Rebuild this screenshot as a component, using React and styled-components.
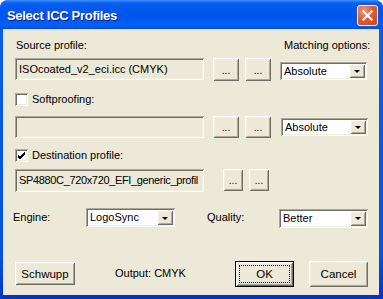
import React from "react";
import styled, { createGlobalStyle } from "styled-components";

const GlobalStyle = createGlobalStyle`
  html, body {
    margin: 0;
    padding: 0;
    background: #ffffff;
  }
  body {
    font-family: "Liberation Sans", Arial, sans-serif;
    font-size: 11px;
    color: #000000;
  }
`;

const raised = `
  box-shadow: inset 1px 1px #ffffff, inset -1px -1px #716f64,
    inset 2px 2px #f1efe2, inset -2px -2px #aca899;
`;

const sunken = `
  box-shadow: inset 1px 1px #aca899, inset -1px -1px #ffffff,
    inset 2px 2px #716f64, inset -2px -2px #f1efe2;
`;

const Window = styled.div`
  width: 383px;
  height: 299px;
  display: flex;
  flex-direction: column;
  border-radius: 8px 8px 0 0;
  background: linear-gradient(to bottom, #0b5fe9 0%, #0453e1 85%, #0035c4 100%);
  overflow: hidden;
`;

const TitleBar = styled.div`
  height: 29px;
  flex: none;
  display: flex;
  align-items: center;
  justify-content: space-between;
  padding: 0 5px 0 7px;
  background: linear-gradient(
    to bottom,
    #3d95ff 0%,
    #0a5ff2 10%,
    #0058ee 30%,
    #0056ea 60%,
    #0062fc 88%,
    #0057f0 94%,
    #0045d8 100%
  );
`;

const Title = styled.span`
  font-family: "Liberation Sans", Arial, sans-serif;
  font-weight: bold;
  font-size: 13px;
  letter-spacing: -0.3px;
  color: #ffffff;
  text-shadow: 1px 1px #0a1883;
  padding-top: 1px;
`;

const CloseButton = styled.div`
  width: 21px;
  height: 21px;
  box-sizing: border-box;
  border: 1px solid #ffffff;
  border-radius: 3px;
  background: radial-gradient(circle at 30% 25%, #f29476 0%, #e35d35 45%, #c8421a 100%);
  display: flex;
  align-items: center;
  justify-content: center;
  margin-top: 2px;
`;

const Content = styled.div`
  flex: 1;
  margin: 0 4px 4px 3px;
  background: #ece9d8;
  display: flex;
  flex-direction: column;
  padding-left: 12px;
`;

const Row = styled.div`
  display: flex;
  align-items: ${(p) => p.$align || "flex-start"};
  height: ${(p) => p.$h}px;
  margin-top: ${(p) => p.$mt}px;
`;

const Label = styled.span`
  display: block;
  line-height: 13px;
  white-space: nowrap;
  margin-left: ${(p) => p.$ml || 0}px;
  margin-top: ${(p) => p.$mt || 0}px;
  width: ${(p) => (p.$w ? `${p.$w}px` : "auto")};
`;

const Field = styled.div`
  width: ${(p) => p.$w}px;
  height: ${(p) => p.$h}px;
  box-sizing: border-box;
  ${sunken}
  background: #ece9d8;
  padding: 4px 3px 0 4px;
  line-height: 14px;
  white-space: nowrap;
  overflow: hidden;
  letter-spacing: ${(p) => p.$ls || 0}px;
`;

const DotsButton = styled.div`
  width: ${(p) => p.$w}px;
  height: ${(p) => p.$h}px;
  margin-left: ${(p) => p.$ml}px;
  ${raised}
  background: #ece9d8;
  display: flex;
  align-items: flex-end;
  justify-content: center;
  padding-bottom: 6px;
  box-sizing: border-box;
  font-size: 10px;
  line-height: 8px;
`;

const Combo = styled.div`
  width: ${(p) => p.$w}px;
  height: ${(p) => p.$h}px;
  margin-left: ${(p) => p.$ml || 0}px;
  margin-top: ${(p) => p.$mt || 0}px;
  box-sizing: border-box;
  ${sunken}
  background: #ffffff;
  display: flex;
  align-items: stretch;
  padding: 2px;
`;

const ComboText = styled.span`
  flex: 1;
  padding-left: 2px;
  line-height: ${(p) => p.$lh}px;
  white-space: nowrap;
`;

const ComboArrow = styled.div`
  width: 16px;
  ${raised}
  background: #ece9d8;
  display: flex;
  align-items: center;
  justify-content: center;
  &::after {
    content: "";
    width: 0;
    height: 0;
    margin-top: 1px;
    border-left: 3px solid transparent;
    border-right: 3px solid transparent;
    border-top: 3px solid #000000;
  }
`;

const CheckBox = styled.div`
  width: 13px;
  height: 13px;
  box-sizing: border-box;
  ${sunken}
  background: #ffffff;
  display: flex;
  align-items: center;
  justify-content: center;
`;

const CheckLabel = styled.span`
  margin-left: 4px;
  line-height: 13px;
`;

const PushButton = styled.div`
  width: ${(p) => p.$w}px;
  height: ${(p) => p.$h}px;
  margin-left: ${(p) => p.$ml || 0}px;
  margin-top: ${(p) => p.$mt || 0}px;
  box-sizing: border-box;
  background: #ece9d8;
  ${raised}
  display: flex;
  align-items: center;
  justify-content: center;
  font-size: 11.5px;
  position: relative;
`;

const DefaultButton = styled(PushButton)`
  border: 1px solid #000000;
`;

const FocusRing = styled.span`
  position: absolute;
  inset: 3px;
  border: 1px dotted #000000;
`;

function Dots({ w, h, ml }) {
  return (
    <DotsButton $w={w} $h={h} $ml={ml}>
      ...
    </DotsButton>
  );
}

function Dropdown({ value, w, h, ml, mt }) {
  return (
    <Combo $w={w} $h={h} $ml={ml} $mt={mt}>
      <ComboText $lh={h - 4}>{value}</ComboText>
      <ComboArrow />
    </Combo>
  );
}

function Check({ checked, label }) {
  return (
    <>
      <CheckBox>
        {checked && (
          <svg width="9" height="9" viewBox="0 0 9 9">
            <path d="M1 4 L3 6 L8 1 M1 5 L3 7 L8 2 M1 6 L3 8 L8 3" stroke="#000" strokeWidth="1" fill="none" />
          </svg>
        )}
      </CheckBox>
      <CheckLabel>{label}</CheckLabel>
    </>
  );
}

export default function App() {
  return (
    <>
      <GlobalStyle />
      <Window>
        <TitleBar>
          <Title>Select ICC Profiles</Title>
          <CloseButton>
            <svg width="13" height="13" viewBox="0 0 13 13">
              <path d="M2.5 2.5 L10.5 10.5 M10.5 2.5 L2.5 10.5" stroke="#ffffff" strokeWidth="2.2" strokeLinecap="square" />
            </svg>
          </CloseButton>
        </TitleBar>
        <Content>
          <Row $h={13} $mt={10}>
            <Label $ml={1} $w={268}>Source profile:</Label>
            <Label>Matching options:</Label>
          </Row>
          <Row $h={23} $mt={6}>
            <Field $w={189} $h={22}>ISOcoated_v2_eci.icc (CMYK)</Field>
            <Dots w={26} h={23} ml={9} />
            <Dots w={26} h={23} ml={6} />
            <Dropdown value="Absolute" w={87} h={18} ml={9} mt={4} />
          </Row>
          <Row $h={13} $mt={12} $align="center">
            <Check label="Softproofing:" />
          </Row>
          <Row $h={23} $mt={10}>
            <Field $w={189} $h={22} />
            <Dots w={26} h={22} ml={9} />
            <Dots w={26} h={22} ml={6} />
            <Dropdown value="Absolute" w={87} h={18} ml={10} mt={2} />
          </Row>
          <Row $h={13} $mt={10} $align="center">
            <Check checked label="Destination profile:" />
          </Row>
          <Row $h={23} $mt={7}>
            <Field $w={189} $h={23} $ls={-0.35}>SP4880C_720x720_EFI_generic_profil</Field>
            <Dots w={20} h={22} ml={19} />
            <Dots w={20} h={22} ml={6} />
          </Row>
          <Row $h={19} $mt={16} $align="center">
            <Label $ml={-2} $w={73}>Engine:</Label>
            <Dropdown value="LogoSync" w={89} h={19} />
            <Label $ml={32} $w={72}>Quality:</Label>
            <Dropdown value="Better" w={89} h={19} mt={1} />
          </Row>
          <Row $h={26} $mt={34} $align="flex-start">
            <PushButton $w={60} $h={23} $mt={1}>Schwupp</PushButton>
            <Label $ml={40} $w={120} $mt={6}>Output: CMYK</Label>
            <DefaultButton $w={59} $h={26}>
              OK
              <FocusRing />
            </DefaultButton>
            <PushButton $w={59} $h={26} $ml={15}>Cancel</PushButton>
          </Row>
        </Content>
      </Window>
    </>
  );
}
